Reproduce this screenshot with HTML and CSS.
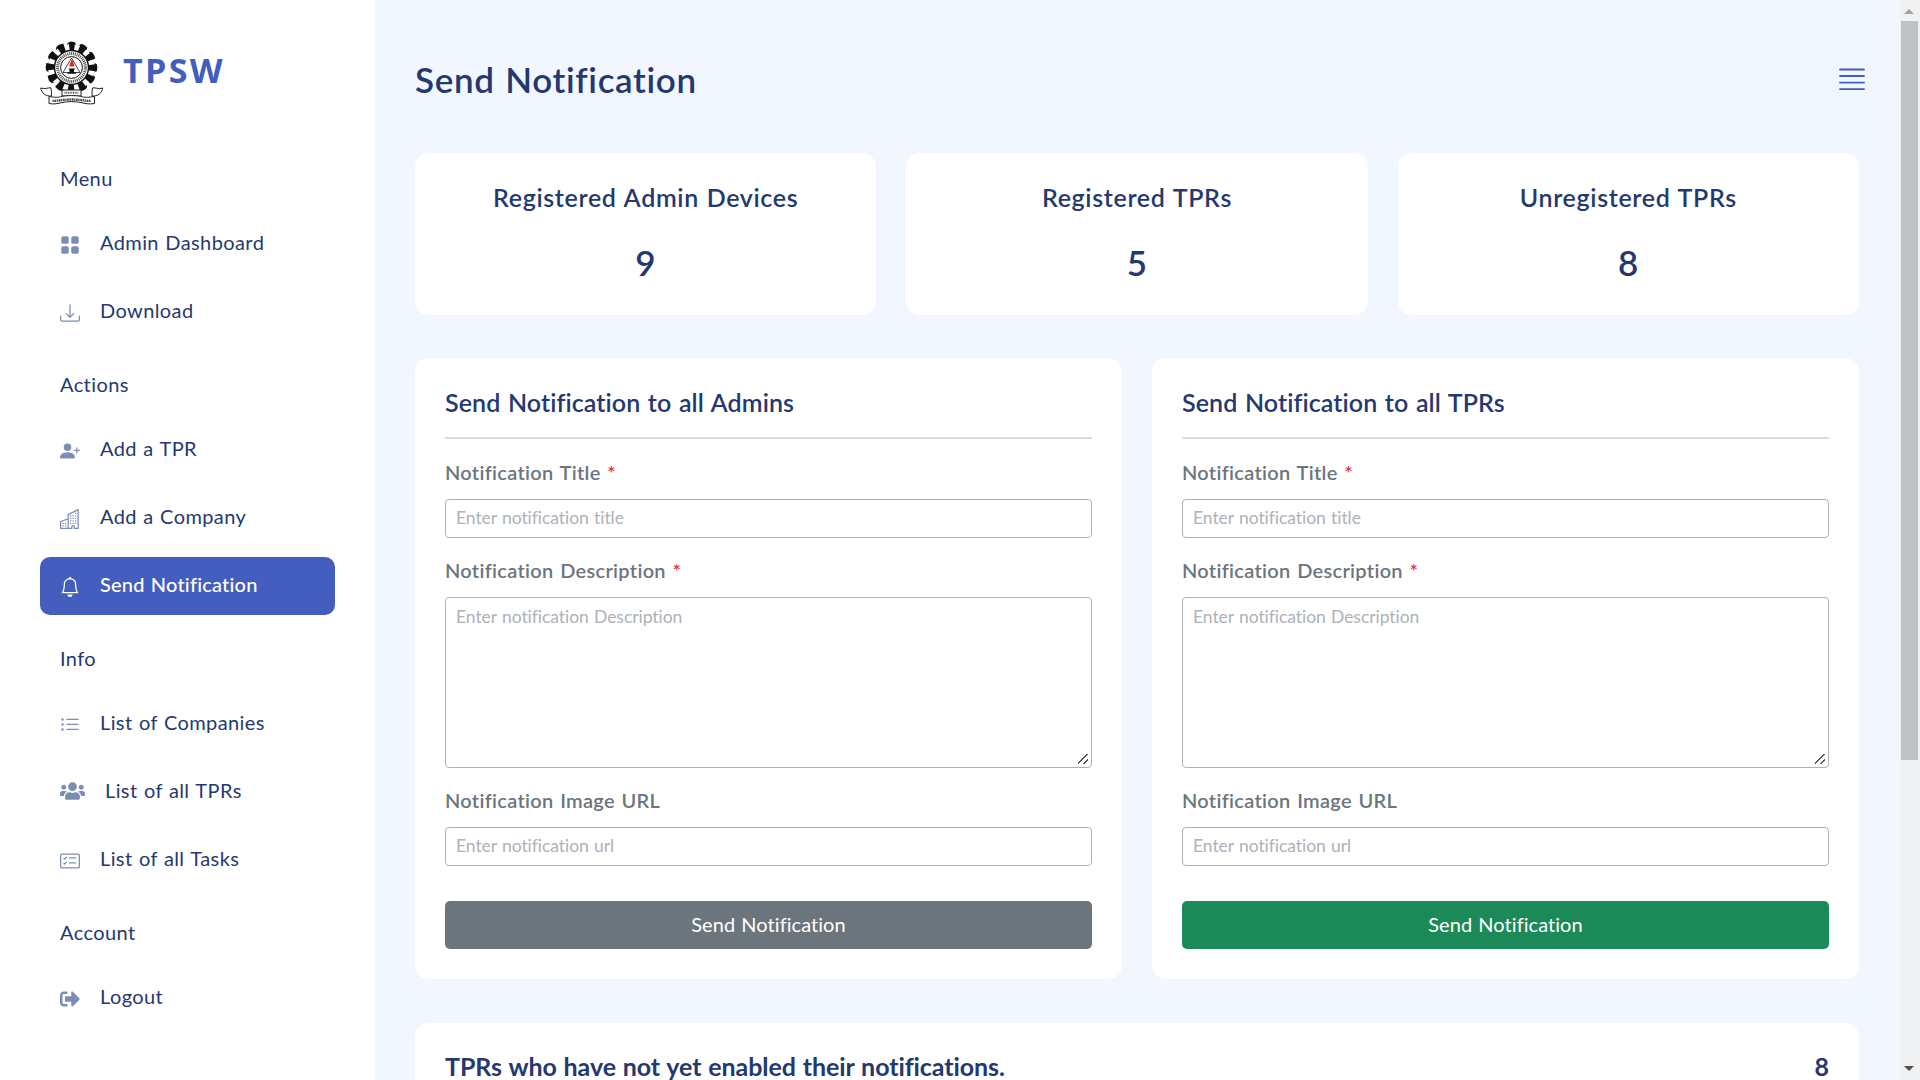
FILE: index.html
```html
<!DOCTYPE html>
<html lang="en">
<head>
<meta charset="utf-8">
<title>TPSW - Send Notification</title>
<link rel="stylesheet" href="styles.css">
</head>
<body>
<div class="app">
  <aside class="sidebar">
    <div class="brand">
      <svg class="emblem" viewBox="0 0 64 64">
        <g fill="#fff" stroke="#111" stroke-width="1.600">
          <circle cx="31.5" cy="6" r="4.600"/><circle cx="41.700" cy="8.700" r="4.600"/><circle cx="49.200" cy="16.200" r="4.600"/><circle cx="52" cy="26.500" r="4.600"/><circle cx="49.200" cy="36.700" r="4.600"/><circle cx="41.700" cy="44.200" r="4.600"/><circle cx="31.500" cy="47" r="4.600"/><circle cx="21.200" cy="44.200" r="4.600"/><circle cx="13.700" cy="36.700" r="4.600"/><circle cx="11" cy="26.500" r="4.600"/><circle cx="13.700" cy="16.200" r="4.600"/><circle cx="21.200" cy="8.700" r="4.600"/>
        </g>
        <circle cx="31.5" cy="26.5" r="20" fill="none" stroke="#fff" stroke-width="7"/>
        <circle cx="31.5" cy="26.5" r="21.2" fill="none" stroke="#111" stroke-width="8.600" stroke-dasharray="6.400 4.700" stroke-dashoffset="3.200" transform="rotate(-90 31.5 26.5)"/>
        <circle cx="31.5" cy="26.5" r="17" fill="#fff" stroke="#111" stroke-width="1.400"/>
        <circle cx="31.5" cy="26.5" r="13.900" fill="none" stroke="#555" stroke-width="3" stroke-dasharray="1.100 .8"/>
        <circle cx="31.5" cy="26.5" r="10.900" fill="#fff" stroke="#111" stroke-width="1"/>
        <path d="M31.500 17 23 31.500h17z" fill="none" stroke="#333" stroke-width=".9"/>
        <path d="M32 17.500c-.6 3-2.800 5-2.600 8h4.800c.2-3-1.700-5-2.200-8z" fill="#e3262b"/>
        <path d="M28.500 27.500h7l-1.500 1.600v2.200h2v1.400h-8.500v-1.400h2v-2.200z" fill="#111"/>
        <path d="M9 57.500 11.500 55C5.500 55.500 1.500 52 .8 47c4.200 1.500 7-.5 10-.2 1 3 .5 6 .7 8.200M54.500 57.500 52 55c6 .5 10-3 10.700-8-4.200 1.500-7-.5-10-.2-1 3-.5 6-.7 8.200" fill="#fff" stroke="#222" stroke-width="1"/>
        <path d="M22 49h19v6H22z" fill="#fff" stroke="#222" stroke-width="1"/>
        <path d="M24.500 51.800h14" stroke="#555" stroke-width="2" stroke-dasharray="1 .7"/>
        <path d="M9 55.500c7 1 9 1.200 13-.2 6-1 13-1 19 0 4 1.400 6 1.200 13.500.2v7c-5.500 1-9.500 0-13.500-1-6-1.200-13-1.200-19 0-4 1-8 2-13 1z" fill="#fff" stroke="#222" stroke-width="1"/>
        <path d="M12.500 59.800c5 .4 9-1.300 19-1.300s14 1.700 19 1.300" fill="none" stroke="#444" stroke-width="2.300" stroke-dasharray="1.300 .6 1.800 .6"/>
      </svg>
      <span class="brand-name">TPSW</span>
    </div>
    <nav class="menu">
      <h6 class="menu-title">Menu</h6>
      <a class="menu-item"><svg class="icon" viewBox="0 0 16 16"><path d="M1 2.500A1.500 1.500 0 0 1 2.500 1h3A1.500 1.500 0 0 1 7 2.500v3A1.500 1.500 0 0 1 5.500 7h-3A1.500 1.500 0 0 1 1 5.500zm8 0A1.500 1.500 0 0 1 10.500 1h3A1.500 1.500 0 0 1 15 2.500v3A1.500 1.500 0 0 1 13.500 7h-3A1.500 1.500 0 0 1 9 5.500zm-8 8A1.500 1.500 0 0 1 2.500 9h3A1.500 1.500 0 0 1 7 10.500v3A1.500 1.500 0 0 1 5.500 15h-3A1.500 1.500 0 0 1 1 13.500zm8 0A1.500 1.500 0 0 1 10.500 9h3a1.500 1.500 0 0 1 1.500 1.500v3a1.500 1.500 0 0 1-1.500 1.500h-3A1.500 1.500 0 0 1 9 13.500z"/></svg><span>Admin Dashboard</span></a>
      <a class="menu-item"><svg class="icon" viewBox="0 0 16 16"><path d="M.5 9.900a.5.5 0 0 1 .5.5v2.500a1 1 0 0 0 1 1h12a1 1 0 0 0 1-1v-2.500a.5.5 0 0 1 1 0v2.500a2 2 0 0 1-2 2H2a2 2 0 0 1-2-2v-2.500a.5.5 0 0 1 .5-.5z"/><path d="M7.646 11.854a.5.5 0 0 0 .708 0l3-3a.5.5 0 0 0-.708-.708L8.500 10.293V1.500a.5.5 0 0 0-1 0v8.793L5.354 8.146a.5.5 0 1 0-.708.708l3 3z"/></svg><span>Download</span></a>

      <h6 class="menu-title">Actions</h6>
      <a class="menu-item"><svg class="icon" viewBox="0 0 16 16"><path d="M1 14s-1 0-1-1 1-4 6-4 6 3 6 4-1 1-1 1H1zm5-6a3 3 0 1 0 0-6 3 3 0 0 0 0 6z"/><path fill-rule="evenodd" d="M13.500 5a.5.5 0 0 1 .5.5V7h1.500a.5.5 0 0 1 0 1H14v1.500a.5.5 0 0 1-1 0V8h-1.500a.5.5 0 0 1 0-1H13V5.500a.5.5 0 0 1 .5-.5z"/></svg><span>Add a TPR</span></a>
      <a class="menu-item"><svg class="icon" viewBox="0 0 16 16"><path fill-rule="evenodd" d="M14.763.075A.5.5 0 0 1 15 .5v15a.5.5 0 0 1-.5.5h-3a.5.5 0 0 1-.5-.5V14h-1v1.500a.5.5 0 0 1-.5.5h-9a.5.5 0 0 1-.5-.5V10a.5.5 0 0 1 .342-.474L6 7.640V4.500a.5.5 0 0 1 .276-.447l8-4a.5.5 0 0 1 .487.022zM6 8.694L1 10.360V15h5V8.694zM7 15h2v-1.500a.5.5 0 0 1 .5-.5h2a.5.5 0 0 1 .5.5V15h2V1.309l-7 3.500V15z"/><path d="M2 11h1v1H2v-1zm2 0h1v1H4v-1zm-2 2h1v1H2v-1zm2 0h1v1H4v-1zm4-4h1v1H8V9zm2 0h1v1h-1V9zm-2 2h1v1H8v-1zm2 0h1v1h-1v-1zm2-2h1v1h-1V9zm0 2h1v1h-1v-1zM8 7h1v1H8V7zm2 0h1v1h-1V7zm2 0h1v1h-1V7zM8 5h1v1H8V5zm2 0h1v1h-1V5zm2 0h1v1h-1V5zm0-2h1v1h-1V3z"/></svg><span>Add a Company</span></a>
      <a class="menu-item active"><svg class="icon" viewBox="0 0 16 16"><path d="M8 16a2 2 0 0 0 2-2H6a2 2 0 0 0 2 2zM8 1.918l-.797.161A4.002 4.002 0 0 0 4 6c0 .628-.134 2.197-.459 3.742-.16.767-.376 1.566-.663 2.258h10.244c-.287-.692-.502-1.490-.663-2.258C12.134 8.197 12 6.628 12 6a4.002 4.002 0 0 0-3.203-3.920L8 1.917zM14.220 12c.223.447.481.801.78 1H1c.299-.199.557-.553.780-1C2.680 10.200 3 6.880 3 6c0-2.420 1.720-4.440 4.005-4.901a1 1 0 1 1 1.990 0A5.002 5.002 0 0 1 13 6c0 .880.320 4.200 1.220 6z"/></svg><span>Send Notification</span></a>

      <h6 class="menu-title">Info</h6>
      <a class="menu-item"><svg class="icon" viewBox="0 0 16 16"><path fill-rule="evenodd" d="M5 11.500a.5.5 0 0 1 .5-.5h9a.5.5 0 0 1 0 1h-9a.5.5 0 0 1-.5-.5zm0-4a.5.5 0 0 1 .5-.5h9a.5.5 0 0 1 0 1h-9a.5.5 0 0 1-.5-.5zm0-4a.5.5 0 0 1 .5-.5h9a.5.5 0 0 1 0 1h-9a.5.5 0 0 1-.5-.5zm-3 1a1 1 0 1 0 0-2 1 1 0 0 0 0 2zm0 4a1 1 0 1 0 0-2 1 1 0 0 0 0 2zm0 4a1 1 0 1 0 0-2 1 1 0 0 0 0 2z"/></svg><span>List of Companies</span></a>
      <a class="menu-item"><svg class="icon wide" viewBox="0 0 640 512"><path d="M96 224c35.300 0 64-28.700 64-64s-28.700-64-64-64-64 28.700-64 64 28.700 64 64 64zm448 0c35.300 0 64-28.700 64-64s-28.700-64-64-64-64 28.700-64 64 28.700 64 64 64zm32 32h-64c-17.600 0-33.500 7.100-45.100 18.600 40.300 22.100 68.900 62 75.100 109.400h66c17.700 0 32-14.300 32-32v-32c0-35.300-28.700-64-64-64zm-256 0c61.900 0 112-50.100 112-112S381.900 32 320 32 208 82.100 208 144s50.100 112 112 112zm76.800 32h-8.300c-20.800 10-43.900 16-68.500 16s-47.600-6-68.500-16h-8.300C179.600 288 128 339.600 128 403.200V432c0 26.500 21.500 48 48 48h288c26.500 0 48-21.500 48-48v-28.800c0-63.600-51.600-115.200-115.200-115.200zm-223.700-13.400C161.500 263.100 145.600 256 128 256H64c-35.300 0-64 28.700-64 64v32c0 17.700 14.300 32 32 32h65.900c6.300-47.400 34.900-87.300 75.200-109.400z"/></svg><span>List of all TPRs</span></a>
      <a class="menu-item"><svg class="icon" viewBox="0 0 16 16"><path d="M14.500 3a.5.5 0 0 1 .5.5v9a.5.5 0 0 1-.5.5h-13a.5.5 0 0 1-.5-.5v-9a.5.5 0 0 1 .5-.5h13zm-13-1A1.500 1.500 0 0 0 0 3.500v9A1.500 1.500 0 0 0 1.500 14h13a1.500 1.500 0 0 0 1.500-1.500v-9A1.500 1.500 0 0 0 14.500 2h-13z"/><path d="M7 5.500a.5.5 0 0 1 .5-.5h5a.5.5 0 0 1 0 1h-5a.5.5 0 0 1-.5-.5zm-1.496-.854a.5.5 0 0 1 0 .708l-1.500 1.500a.5.5 0 0 1-.708 0l-.5-.5a.5.5 0 1 1 .708-.708l.146.147 1.146-1.147a.5.5 0 0 1 .708 0zM7 9.500a.5.5 0 0 1 .5-.5h5a.5.5 0 0 1 0 1h-5a.5.5 0 0 1-.5-.5zm-1.496-.854a.5.5 0 0 1 0 .708l-1.500 1.500a.5.5 0 0 1-.708 0l-.5-.5a.5.5 0 0 1 .708-.708l.146.147 1.146-1.147a.5.5 0 0 1 .708 0z"/></svg><span>List of all Tasks</span></a>

      <h6 class="menu-title">Account</h6>
      <a class="menu-item"><svg class="icon" viewBox="0 0 512 512"><path d="M497 273L329 441c-15 15-41 4.500-41-17v-96H152c-13.300 0-24-10.700-24-24v-96c0-13.300 10.700-24 24-24h136V88c0-21.400 25.900-32 41-17l168 168c9.300 9.400 9.300 24.600 0 34zM192 436v-40c0-6.600-5.400-12-12-12H96c-17.700 0-32-14.300-32-32V160c0-17.700 14.300-32 32-32h84c6.600 0 12-5.400 12-12V76c0-6.600-5.400-12-12-12H96c-53 0-96 43-96 96v192c0 53 43 96 96 96h84c6.600 0 12-5.400 12-12z"/></svg><span>Logout</span></a>
    </nav>
  </aside>

  <main class="main">
    <header class="page-head">
      <h3 class="page-title">Send Notification</h3>
      <svg class="burger" viewBox="0 0 26 22"><path d="M1 1.500h24M1 8h24M1 14.700h24M1 21.200h24" stroke="#435ebe" stroke-width="1.800" stroke-linecap="round"/></svg>
    </header>

    <section class="stats">
      <div class="card stat"><h4>Registered Admin Devices</h4><p>9</p></div>
      <div class="card stat"><h4>Registered TPRs</h4><p>5</p></div>
      <div class="card stat"><h4>Unregistered TPRs</h4><p>8</p></div>
    </section>

    <section class="forms">
      <form class="card form">
        <h4 class="card-title">Send Notification to all Admins</h4>
        <label>Notification Title <b>*</b></label>
        <input type="text" placeholder="Enter notification title">
        <label>Notification Description <b>*</b></label>
        <textarea placeholder="Enter notification Description"></textarea>
        <label>Notification Image URL</label>
        <input type="text" placeholder="Enter notification url">
        <button type="button" class="btn grey">Send Notification</button>
      </form>
      <form class="card form">
        <h4 class="card-title">Send Notification to all TPRs</h4>
        <label>Notification Title <b>*</b></label>
        <input type="text" placeholder="Enter notification title">
        <label>Notification Description <b>*</b></label>
        <textarea placeholder="Enter notification Description"></textarea>
        <label>Notification Image URL</label>
        <input type="text" placeholder="Enter notification url">
        <button type="button" class="btn green">Send Notification</button>
      </form>
    </section>

    <section class="card pending">
      <h4>TPRs who have not yet enabled their notifications.</h4>
      <h4>8</h4>
    </section>
  </main>

  <div class="scrollbar">
    <i class="arrow up"></i>
    <div class="thumb"></div>
    <i class="arrow down"></i>
  </div>
</div>
</body>
</html>
```
FILE: styles.css
```css
* { box-sizing: border-box; margin: 0; }
html, body { height: 100%; overflow: hidden; }
body {
  font-family: Lato, "Open Sans", sans-serif;
  font-size: 20px;
  line-height: 30px;
  letter-spacing: .3px;
  word-spacing: 1.3px;
  font-variant-ligatures: none;
  color: #25396f;
  background: #f2f7ff;
}
h3, h4, h6 { font-weight: 600; }
.app { display: grid; grid-template-columns: 375px 1fr 20px; height: 100vh; }

/* sidebar */
.sidebar { background: #fff; padding: 0 40px; }
.brand { display: flex; align-items: flex-start; height: 165px; padding-top: 41px; gap: 19px; }
.emblem { width: 64px; height: 64px; }
.brand-name {
  font: 700 34px/40px "Open Sans", sans-serif;
  letter-spacing: 2.3px;
  color: #435ebe;
  margin-top: 9px;
}
.menu { display: flex; flex-direction: column; gap: 10px; letter-spacing: .4px; word-spacing: .9px; }
.menu-title { font-size: 20px; font-weight: 400; line-height: 26px; padding-left: 20px; margin: 20px 0 14px; }
.menu-title:first-child { margin-top: 0; }
.menu-item { display: flex; align-items: center; gap: 20px; height: 58px; padding: 0 20px; border-radius: 10px; }
.menu-item span { margin-top: -4px; }
.icon { width: 20px; height: 20px; margin-top: 1px; fill: #7c8db5; }
.icon.wide { width: 25px; margin-top: -2px; }
.active { background: #435ebe; color: #fff; font-weight: 500; letter-spacing: .2px; }
.active .icon { fill: #fff; }

/* content */
.main { padding: 0 41px 0 40px; overflow: hidden; }
.page-head { display: flex; justify-content: space-between; align-items: flex-start; height: 153px; padding-top: 58px; }
.page-title { font-size: 35px; line-height: 42px; letter-spacing: .65px; }
.burger { width: 26px; height: 22px; margin: 10px -6px 0 0; fill: none; }
.card { background: #fff; border-radius: 14px; }
.card h4 { font-size: 25px; line-height: 30px; letter-spacing: .65px; word-spacing: 1px; }
.stats { display: grid; grid-template-columns: repeat(3, 1fr); gap: 30px; }
.stat { height: 162px; padding-top: 29px; text-align: center; }
.stat p { font-size: 35px; font-weight: 600; line-height: 42px; margin-top: 29px; }
.forms { display: grid; grid-template-columns: 1fr 1fr; gap: 30px; margin-top: 43px; }
.form { height: 621px; padding: 29px 30px 0; display: flex; flex-direction: column; }
.card .card-title { height: 52px; border-bottom: 2px solid #dcdcde; margin-bottom: 18px; flex: none; letter-spacing: .1px; word-spacing: 1.2px; }
.form label { color: #6c757d; font-weight: 600; line-height: 30px; margin-bottom: 12px; }
.form label b { color: #dc3545; font-weight: 600; }
.form input, .form textarea {
  font: 400 17.5px/26px Lato, sans-serif;
  letter-spacing: -.05px;
  word-spacing: .8px;
  color: #607080;
  border: 1px solid #b0b0b6;
  border-radius: 4px;
  padding: 4px 10px 6px;
  width: 100%;
  background: #fff;
  margin-bottom: 17px;
}
.form input { height: 39px; }
.form textarea { height: 171px; padding-top: 6px; }
.form textarea::-webkit-resizer {
  background: linear-gradient(135deg, transparent 44%, #555 45%, #555 54%, transparent 55%, transparent 74%, #555 75%, #555 84%, transparent 85%) 2px 2px / 10px 10px no-repeat;
}
.form ::placeholder { color: #adb1b9; opacity: 1; }
.btn {
  height: 48px;
  border: 0;
  border-radius: 5px;
  padding: 0 0 3px;
  color: #fff;
  font: 400 20px/30px Lato, sans-serif;
  letter-spacing: .05px;
  word-spacing: 1px;
  margin-top: 18px;
}
.grey { background: #6c757b; }
.green { background: #1b8a58; }
.pending { display: flex; justify-content: space-between; height: 200px; margin-top: 44px; padding: 28px 30px; }
.pending h4 { font-weight: 700; letter-spacing: -.08px; word-spacing: .9px; }

/* page scrollbar */
.scrollbar { background: #f0f1f3; display: flex; flex-direction: column; align-items: center; }
.arrow { border: 5px solid transparent; width: 0; height: 0; margin-left: -2px; }
.up { border-top: 0; border-bottom-color: #a3a3a3; margin-top: 9px; }
.thumb { width: 17px; height: 739px; margin: 7px 0 0 -1px; background: #c0c1c3; }
.down { border-bottom: 0; border-top-color: #505050; margin: auto 0 9px -2px; }
```
